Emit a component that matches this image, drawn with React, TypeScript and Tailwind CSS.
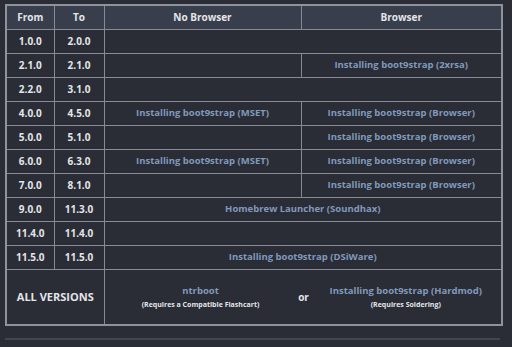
import React from "react";

const link = "text-[#8199bb] text-[9.5px]";
const cell = "border border-[#858a94] text-center align-middle p-0";

type Row = { from: string; to: string; nb?: string; br?: string; span?: string };

const rows: Row[] = [
  { from: "1.0.0", to: "2.0.0", span: "" },
  { from: "2.1.0", to: "2.1.0", nb: "", br: "Installing boot9strap (2xrsa)" },
  { from: "2.2.0", to: "3.1.0", span: "" },
  { from: "4.0.0", to: "4.5.0", nb: "Installing boot9strap (MSET)", br: "Installing boot9strap (Browser)" },
  { from: "5.0.0", to: "5.1.0", nb: "", br: "Installing boot9strap (Browser)" },
  { from: "6.0.0", to: "6.3.0", nb: "Installing boot9strap (MSET)", br: "Installing boot9strap (Browser)" },
  { from: "7.0.0", to: "8.1.0", nb: "", br: "Installing boot9strap (Browser)" },
  { from: "9.0.0", to: "11.3.0", span: "Homebrew Launcher (Soundhax)" },
  { from: "11.4.0", to: "11.4.0", span: "" },
  { from: "11.5.0", to: "11.5.0", span: "Installing boot9strap (DSiWare)" },
];

export default function App() {
  return (
    <div
      className="w-[512px] h-[347px] bg-[#2a2d36] pt-[4px] pl-[5px] overflow-hidden"
      style={{ fontFamily: '"Open Sans", "Noto Sans", sans-serif' }}
    >
      <div className="h-[322px]">
        <table className="table-fixed border-collapse w-[496px] border-2 border-[#8e929b] text-[10px] font-bold text-[#e4e5e8] leading-none">
          <colgroup>
            <col className="w-[48px]" />
            <col className="w-[50px]" />
            <col className="w-[197px]" />
            <col className="w-[201px]" />
          </colgroup>
          <thead>
            <tr className="h-[24px] bg-[#393e4c]">
              <th className={cell}>From</th>
              <th className={cell}>To</th>
              <th className={cell}>No Browser</th>
              <th className={cell}>Browser</th>
            </tr>
          </thead>
          <tbody>
            {rows.map((r) => (
              <tr key={r.from} className="h-[24px]">
                <td className={cell}>{r.from}</td>
                <td className={cell}>{r.to}</td>
                {r.span !== undefined ? (
                  <td colSpan={2} className={`${cell} ${link}`}>{r.span}</td>
                ) : (
                  <>
                    <td className={`${cell} ${link}`}>{r.nb}</td>
                    <td className={`${cell} ${link}`}>{r.br}</td>
                  </>
                )}
              </tr>
            ))}
            <tr className="h-[56px]">
              <td colSpan={2} className={`${cell} text-[11px]`}>ALL VERSIONS</td>
              <td colSpan={2} className={cell}>
                <div className="flex items-center">
                  <div className="w-[192px] flex flex-col items-center gap-[6px]">
                    <span className={link}>ntrboot</span>
                    <span className="text-[7px]">(Requires a Compatible Flashcart)</span>
                  </div>
                  <div className="w-[14px] text-center">or</div>
                  <div className="flex-1 flex flex-col items-center gap-[6px]">
                    <span className={link}>Installing boot9strap (Hardmod)</span>
                    <span className="text-[7px]">(Requires Soldering)</span>
                  </div>
                </div>
              </td>
            </tr>
          </tbody>
        </table>
      </div>
      <div className="mt-[12px] w-[495px] h-[2px] bg-[#42464f]" />
    </div>
  );
}
